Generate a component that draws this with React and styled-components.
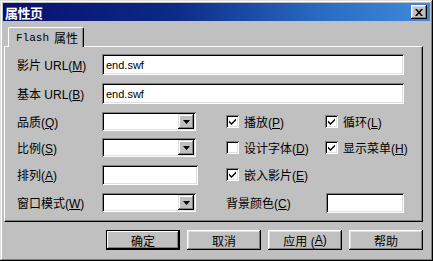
import React from "react";
import styled, { createGlobalStyle } from "styled-components";

const Global = createGlobalStyle`
  html, body { margin:0; padding:0; background:#c0c0c0; }
  body { font-family: "Liberation Sans", "Noto Sans CJK SC", sans-serif; font-size:12px; color:#000; }
  * { box-sizing:border-box; }
`;

const cjk = `"Liberation Sans", "Noto Sans CJK SC", sans-serif`;

const Window = styled.div`
  width:433px;
  height:261px;
  padding:3px;
  background:#c0c0c0;
  box-shadow: inset -1px -1px #000, inset 1px 1px #dfdfdf, inset -2px -2px #808080, inset 2px 2px #fff;
  display:flex;
  flex-direction:column;
`;

const TitleBar = styled.div`
  height:18px;
  background:linear-gradient(to right, #08106e 0%, #0c2a86 40%, #2a6cc4 75%, #3f8ada 100%);
  display:flex;
  align-items:center;
  justify-content:space-between;
  padding:0 3px 0 2px;
`;

const Title = styled.span`
  color:#fff;
  font-family:${cjk};
  font-size:13px;
  font-weight:bold;
  letter-spacing:-0.5px;
`;

const CloseBtn = styled.div`
  width:16px;
  height:14px;
  background:#c0c0c0;
  box-shadow: inset -1px -1px #000, inset 1px 1px #fff, inset -2px -2px #808080, inset 2px 2px #dfdfdf;
  display:flex;
  align-items:center;
  justify-content:center;
`;

const Body = styled.div`
  padding:6px 7px 0 1px;
  display:flex;
  flex-direction:column;
`;

const TabStrip = styled.div`
  display:flex;
  padding-left:4px;
`;

const Tab = styled.div`
  position:relative;
  z-index:1;
  width:76px;
  height:20px;
  margin-bottom:-1px;
  background:#c0c0c0;
  border-top:1px solid #fff;
  border-left:1px solid #fff;
  border-right:1px solid #000;
  border-radius:2px 2px 0 0;
  box-shadow: inset -1px 0 #808080;
  display:flex;
  align-items:center;
  padding-left:7px;
  font-family:${cjk};
  font-size:12px;
`;

const Mono = styled.span`
  font-family:"Liberation Mono", monospace;
  font-size:11px;
  margin-right:5px;
`;

const Panel = styled.div`
  height:176px;
  border-top:1px solid #fff;
  border-left:1px solid #fff;
  border-right:1px solid #000;
  border-bottom:1px solid #000;
  box-shadow: inset -1px -1px #808080;
  padding:3px 18px 0 12px;
`;

const UrlGrid = styled.div`
  display:grid;
  grid-template-columns:85px 1fr;
  grid-template-rows:29px 29px;
  align-items:center;
`;

const SettingsGrid = styled.div`
  display:grid;
  grid-template-columns:85px 124px 99px 79px;
  grid-template-rows:27px 25px 29px 27px;
  align-items:center;
`;

const Label = styled.span`
  font-family:${cjk};
  font-size:12px;
  white-space:nowrap;
`;

const U = styled.span`
  text-decoration:underline;
  text-underline-offset:1px;
`;

const Sunken = styled.div`
  width:${(p) => p.w || "100%"};
  height:${(p) => p.h || 21}px;
  background:#fff;
  box-shadow: inset 1px 1px #808080, inset -1px -1px #fff, inset 2px 2px #000, inset -2px -2px #dfdfdf;
  display:flex;
  align-items:center;
  justify-content:space-between;
  padding:0 2px 0 4px;
  font-size:11px;
  justify-self:${(p) => p.align || "start"};
`;

const DropBtn = styled.div`
  width:16px;
  height:15px;
  background:#c0c0c0;
  box-shadow: inset -1px -1px #000, inset 1px 1px #dfdfdf, inset -2px -2px #808080, inset 2px 2px #fff;
  display:flex;
  align-items:center;
  justify-content:center;
`;

const Check = styled.label`
  display:flex;
  align-items:center;
  gap:5px;
  font-family:${cjk};
  font-size:12px;
  white-space:nowrap;
`;

const Box = styled.span`
  width:13px;
  height:13px;
  flex:none;
  background:#fff;
  box-shadow: inset 1px 1px #808080, inset -1px -1px #fff, inset 2px 2px #000, inset -2px -2px #dfdfdf;
  display:flex;
  align-items:center;
  justify-content:center;
`;

const ButtonRow = styled.div`
  display:flex;
  justify-content:flex-end;
  gap:7px;
  margin-top:8px;
`;

const Button = styled.div`
  width:74px;
  height:20px;
  background:#c0c0c0;
  box-shadow:${(p) =>
    p.primary
      ? "inset -1px -1px #000, inset 1px 1px #000, inset -2px -2px #000, inset 2px 2px #fff, inset -3px -3px #808080"
      : "inset -1px -1px #000, inset 1px 1px #fff, inset -2px -2px #808080, inset 2px 2px #dfdfdf"};
  display:flex;
  align-items:center;
  justify-content:center;
  font-family:${cjk};
  font-size:12px;
`;

const Arrow = () => (
  <svg width="7" height="4" viewBox="0 0 7 4">
    <path d="M0 0h7L3.5 4z" fill="#000" />
  </svg>
);

const Combo = ({ w }) => (
  <Sunken w={w} h={19}>
    <span />
    <DropBtn>
      <Arrow />
    </DropBtn>
  </Sunken>
);

const CheckItem = ({ checked, children }) => (
  <Check>
    <Box>
      {checked && (
        <svg width="7" height="7" viewBox="0 0 7 7">
          <path d="M0 2.5l2.5 2.5L7 0.5v2L2.5 7 0 4.5z" fill="#000" />
        </svg>
      )}
    </Box>
    <span>{children}</span>
  </Check>
);

export default function App() {
  return (
    <>
      <Global />
      <Window>
        <TitleBar>
          <Title>属性页</Title>
          <CloseBtn>
            <svg width="8" height="7" viewBox="0 0 8 7">
              <path d="M0 0h2l2 2.5L6 0h2L5 3.5 8 7H6L4 4.5 2 7H0l3-3.5z" fill="#000" />
            </svg>
          </CloseBtn>
        </TitleBar>
        <Body>
          <TabStrip>
            <Tab>
              <Mono>Flash</Mono>属性
            </Tab>
          </TabStrip>
          <Panel>
            <UrlGrid>
              <Label>
                影片 URL(<U>M</U>)
              </Label>
              <Sunken>end.swf</Sunken>
              <Label>
                基本 URL(<U>B</U>)
              </Label>
              <Sunken>end.swf</Sunken>
            </UrlGrid>
            <SettingsGrid>
              <Label>
                品质(<U>Q</U>)
              </Label>
              <Combo w="94px" />
              <CheckItem checked>
                播放(<U>P</U>)
              </CheckItem>
              <CheckItem checked>
                循环(<U>L</U>)
              </CheckItem>

              <Label>
                比例(<U>S</U>)
              </Label>
              <Combo w="94px" />
              <CheckItem>
                设计字体(<U>D</U>)
              </CheckItem>
              <CheckItem checked>
                显示菜单(<U>H</U>)
              </CheckItem>

              <Label>
                排列(<U>A</U>)
              </Label>
              <Sunken w="96px" h={20} />
              <CheckItem checked>
                嵌入影片(<U>E</U>)
              </CheckItem>
              <span />

              <Label>
                窗口模式(<U>W</U>)
              </Label>
              <Combo w="94px" />
              <Label>
                背景颜色(<U>C</U>)
              </Label>
              <Sunken w="78px" h={20} align="end" />
            </SettingsGrid>
          </Panel>
          <ButtonRow>
            <Button primary>确定</Button>
            <Button>取消</Button>
            <Button>
              应用 (<U>A</U>)
            </Button>
            <Button>帮助</Button>
          </ButtonRow>
        </Body>
      </Window>
    </>
  );
}
